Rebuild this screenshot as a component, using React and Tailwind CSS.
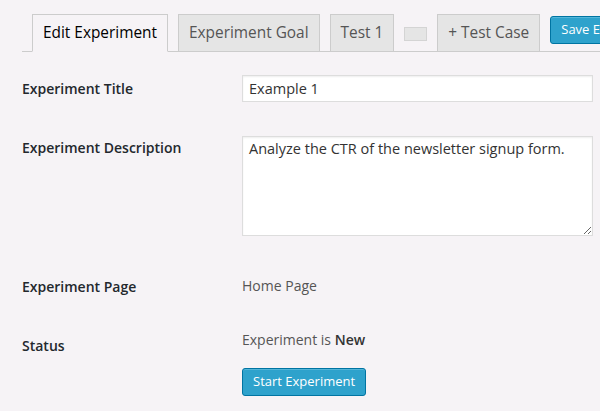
import React from 'react';

const tabs = [
    { label: 'Edit Experiment', active: true },
    { label: 'Experiment Goal' },
    { label: 'Test 1' },
];

const App = () => {
    return (
        <div className="min-h-screen w-full overflow-hidden bg-[#f6f3f6] pl-[22px] font-['Open_Sans',sans-serif] text-[14px] text-[#444]">
            {/* tab bar */}
            <div className="flex items-start whitespace-nowrap border-b border-[#cccccc] pl-[10px] pt-[14px]">
                {tabs.map((tab) => (
                    <div
                        key={tab.label}
                        className={
                            tab.active
                                ? 'relative -mb-px mr-[10px] flex h-[38px] shrink-0 items-center border border-b-[#f6f3f6] border-[#cccccc] bg-[#f6f3f6] px-[10px] pb-px text-[15.4px] text-black'
                                : 'mr-[10px] flex h-[37px] shrink-0 items-center border border-b-0 border-[#cccccc] bg-[#e5e5e5] px-[10px] text-[15.4px] text-[#555]'
                        }
                    >
                        {tab.label}
                    </div>
                ))}
                <span className="mr-[10px] mt-[13px] h-[14px] w-[23px] shrink-0 border border-[#d4d4d4] bg-[#e5e5e5]"></span>
                <div className="mr-[10px] flex h-[37px] shrink-0 items-center border border-b-0 border-[#cccccc] bg-[#e5e5e5] px-[10px] text-[15.4px] text-[#555]">
                    + Test Case
                </div>
                <button className="mt-[2px] h-[28px] shrink-0 rounded-[3px] border border-[#0074a2] bg-[#2ea2cc] px-[10px] text-[13px] text-white shadow-[inset_0_1px_0_rgba(120,200,230,0.5)]">
                    Save Experiment
                </button>
            </div>

            {/* form */}
            <div className="pt-[23px]">
                <div className="flex items-center">
                    <div className="w-[220px] shrink-0 font-semibold leading-5 text-[#23282d]">Experiment Title</div>
                    <input
                        className="h-[27px] w-[351px] border border-[#dddddd] bg-white px-[6px] text-[14.5px] text-[#333] shadow-[inset_0_1px_2px_rgba(0,0,0,0.07)] outline-none"
                        defaultValue="Example 1"
                    />
                </div>

                <div className="mt-[34px] flex items-start">
                    <div className="w-[220px] shrink-0 pt-[2px] font-semibold leading-5 text-[#23282d]">Experiment Description</div>
                    <textarea
                        className="h-[100px] w-[351px] border border-[#dddddd] bg-white px-[6px] py-[2px] text-[14.5px] leading-5 text-[#333] shadow-[inset_0_1px_2px_rgba(0,0,0,0.07)] outline-none"
                        defaultValue="Analyze the CTR of the newsletter signup form."
                    />
                </div>

                <div className="mt-[40px] flex items-start">
                    <div className="w-[220px] shrink-0 pt-px font-semibold leading-5 text-[#23282d]">Experiment Page</div>
                    <div className="leading-5 text-[#555]">Home Page</div>
                </div>

                <div className="mt-[33px] flex items-start">
                    <div className="w-[220px] shrink-0 pt-[6px] font-semibold leading-5 text-[#23282d]">Status</div>
                    <div className="flex flex-col items-start">
                        <div className="leading-5 text-[#555]">
                            Experiment is <span className="font-semibold text-[#333]">New</span>
                        </div>
                        <button className="mt-[18px] h-[28px] rounded-[3px] border border-[#0074a2] bg-[#2ea2cc] px-[10px] text-[13px] text-white shadow-[inset_0_1px_0_rgba(120,200,230,0.5)]">
                            Start Experiment
                        </button>
                    </div>
                </div>
            </div>
        </div>
    );
};

export default App;
